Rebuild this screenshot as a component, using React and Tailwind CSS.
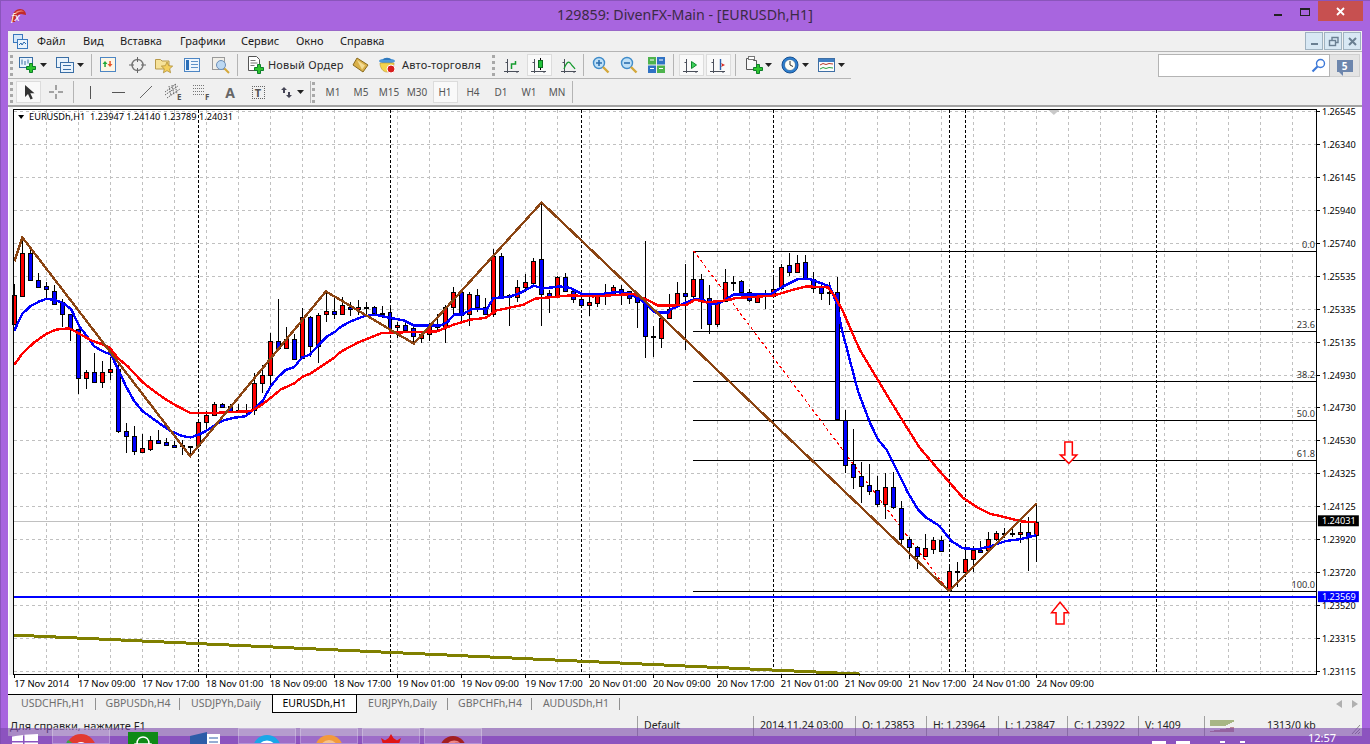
import React from "react";

const R = "#ff0000", B = "#0000ff";
const z6 = [[0,R,282,316,403,403],[1,R,145,190,317,320],[2,B,175,190,271,271],[3,B,250,271,290,293],[4,B,275,289,298,323],[5,B,286,302,341,341],[6,B,327,337,373,411],[7,B,373,373,418,453],[8,B,418,418,563,611],[9,R,540,547,563,597],[10,B,490,547,575,578],[11,R,514,547,575,593],[12,R,500,538,545,570],[13,B,525,538,727,733],[14,B,702,727,740,791],[15,B,712,740,787,797],[16,R,735,778,788,788],[17,R,742,754,781,785],[18,B,722,754,761,764],[19,B,748,760,769,772],[20,B,755,769,773,777],[21,B,752,769,772,797],[22,B,770,770,772,800],[23,R,695,700,769,769],[24,R,665,679,700,725],[25,R,640,646,679,680],[26,B,643,646,653,657],[27,B,645,652,665,668],[28,B,645,664,666,668],[29,R,645,663,665,680],[30,R,550,580,664,678],[31,R,525,556,578,610],[32,R,430,454,556,590],[33,B,326,454,475,475],[34,R,411,448,475,478],[35,B,432,448,508,508],[36,R,354,380,503,508],[37,B,378,380,469,500],[38,R,370,376,469,518],[39,R,305,362,373,395],[40,B,323,362,371,388],[41,R,320,344,371,375],[42,B,335,350,358,378]];
const z7 = [[43,R,330,352,358,375],[44,B,336,352,354,372],[45,B,348,352,368,372],[46,B,348,368,372,385],[47,B,352,367,413,420],[48,R,395,406,412,445],[49,B,400,406,420,430],[50,B,412,414,439,462],[51,R,425,431,443,460],[52,R,398,404,431,452],[53,B,372,404,412,425],[54,R,345,352,412,458],[55,R,290,307,352,372],[56,B,300,307,375,398],[57,R,305,313,373,408],[58,B,296,316,350,365],[59,B,325,350,371,375],[60,R,178,198,371,380],[61,B,188,198,317,320],[62,B,312,316,320,408],[63,R,270,290,322,335],[64,R,252,277,290,305],[65,R,205,214,280,290],[66,B,38,208,311,408],[67,B,300,310,318,368],[68,R,258,262,314,318],[69,B,250,262,302,302],[70,B,295,302,328,340],[71,B,305,328,344,350],[72,R,310,337,344,378],[73,R,310,316,338,350],[74,B,282,308,312,345],[75,R,285,292,308,312],[76,B,285,296,305,345],[77,B,304,304,325,342],[78,B,310,325,337,415],[79,B,153,337,439,503],[80,B,408,439,440,500],[81,R,385,385,443,473],[82,R,312,356,385,385]];
const z8 = [[83,R,125,160,198,200],[84,B,72,160,167,330],[85,R,35,117,167,180],[86,B,102,117,178,266],[87,B,135,175,253,282],[88,R,180,190,253,260],[89,R,88,127,183,185],[90,B,108,125,128,153],[91,B,120,124,155,165],[92,B,148,157,181,185],[93,R,160,165,185,185],[94,B,150,165,168,208],[95,R,112,148,168,170],[96,R,72,80,145,150],[97,B,40,76,95,108],[98,R,45,70,95,95],[99,B,45,67,118,118],[100,B,97,118,145,158],[101,B,125,140,160,180],[102,B,125,156,159,195],[103,B,110,157,539,540]];
const z9 = [[104,B,33,62,197,222],[105,B,90,196,233,270],[106,B,190,232,260,312],[107,B,195,259,275,288],[108,B,232,274,314,325],[109,R,222,265,314,360],[110,B,220,265,325,330],[111,B,305,328,419,435],[112,B,415,421,443,480],[113,B,440,443,470,510],[114,R,405,448,470,470],[115,R,415,424,449,465],[116,B,412,424,455,455],[117,R,495,517,575,578],[118,B,490,517,520,565],[119,R,460,481,520,520],[120,R,442,454,481,520],[121,B,427,453,458,462],[122,R,398,421,453,456],[123,R,396,403,421,425],[124,B,388,403,405,418],[125,B,385,403,406,415],[126,R,372,400,406,433],[127,B,355,400,410,516],[128,R,315,368,408,488]];
const cv = (base, rows) => rows.map(([i, c, wt, bt, bb, wb]) => ({ x: 13 + 8 * i, c, wt: Math.round(base + wt / 3), bt: Math.round(base + bt / 3), bb: Math.round(base + bb / 3), wb: Math.round(base + wb / 3) }));
const candles = [...cv(190, z6), ...cv(190, z7), ...cv(240, z8), ...cv(400, z9)];

const seg = (x0, y0, a) => a.map(([x, y]) => (x0 + x / 3).toFixed(1) + "," + (y0 + y / 3).toFixed(1)).join(" ");
const blue = [seg(10,190,[[10,423],[20,400],[34,372],[60,348],[85,335],[105,328],[130,330],[155,340],[180,358],[205,410],[230,443],[250,470],[275,485],[300,495],[322,540],[345,590],[370,635],[395,665],[420,683],[450,705],[480,725],[515,740],[540,744],[565,735],[590,722],[615,705],[640,692],[670,685],[705,680],[730,660],[755,635],[780,590],[800,565],[825,541],[850,533],[875,503],[898,495],[925,465],[950,440],[975,425]]),
seg(340,190,[[0,412],[30,395],[70,380],[105,375],[150,385],[190,392],[220,407],[300,408],[320,398],[342,375],[365,375],[395,358],[440,358],[460,325],[505,322],[540,310],[580,288],[610,296],[660,290],[690,295],[725,313],[770,315],[830,307],[870,313],[900,328],[945,368],[985,368]]),
seg(670,240,[[0,210],[45,190],[75,178],[95,178],[120,195],[150,190],[190,165],[300,165],[340,140],[385,118],[420,118],[480,140],[500,190],[515,265],[540,360],[565,455],[600,548]]),
seg(830,400,[[145,120],[170,150],[200,210],[235,280],[265,330],[290,355],[330,380],[365,425],[400,447],[445,450],[480,442],[530,425],[570,420],[620,408]])].join(" ");
const red = [seg(10,190,[[10,525],[35,490],[70,458],[105,433],[135,420],[175,416],[210,435],[240,452],[270,463],[295,473],[320,505],[350,530],[395,578],[430,605],[465,630],[490,645],[540,671],[600,671],[650,668],[720,665],[750,648],[780,625],[810,600],[850,582],[875,562],[900,552],[940,525],[970,505]]),
seg(340,190,[[0,487],[50,460],[125,430],[290,425],[340,405],[390,390],[435,385],[470,362],[550,345],[585,327],[690,317],[760,320],[880,313],[920,330],[955,348]]),
seg(670,240,[[0,198],[50,195],[75,180],[110,188],[160,183],[200,175],[310,168],[370,150],[410,140],[475,143],[495,170],[520,215],[550,285],[570,330],[600,380]]),
seg(830,400,[[180,0],[220,65],[270,145],[330,215],[400,295],[445,325],[480,343],[520,352],[580,367],[620,368]])].join(" ");
const brown = "13.3,261.7 21.3,237.7 189.3,456.7 325.3,291.7 413.3,344 541.3,202.7 949.3,591.7 1037.3,504.3";

const prices = ["1.26545","1.26340","1.26145","1.25940","1.25740","1.25535","1.25335","1.25135","1.24930","1.24730","1.24530","1.24325","1.24125","1.23920","1.23720","1.23520","1.23315","1.23115"];
const dates = ["17 Nov 2014","17 Nov 09:00","17 Nov 17:00","18 Nov 01:00","18 Nov 09:00","18 Nov 17:00","19 Nov 01:00","19 Nov 09:00","19 Nov 17:00","20 Nov 01:00","20 Nov 09:00","20 Nov 17:00","21 Nov 01:00","21 Nov 09:00","21 Nov 17:00","24 Nov 01:00","24 Nov 09:00"];
const fibs = [["0.0",251],["23.6",331],["38.2",381],["50.0",421],["61.8",461],["100.0",592]];
const vGrid = Array.from({ length: 40 }, (_, k) => 45 + 32 * k);
const seps = [197, 389, 581, 773, 949, 965, 1157];

function Chart() {
  return (
    <svg viewBox="8 107 1354 588" className="block w-[1354px] h-[588px] bg-white font-['Liberation_Sans',sans-serif] text-[9.2px]">
      <rect x="8" y="107" width="4" height="569" fill="#f0f0f0" />
      <g shapeRendering="crispEdges">
        {prices.map((_, k) => <line key={k} x1="13" x2="1318" y1={111.5 + 33 * k} y2={111.5 + 33 * k} stroke="#c0c0c0" strokeDasharray="3 3" />)}
        {vGrid.map((x) => <line key={x} x1={x + 0.5} x2={x + 0.5} y1="110" y2="675" stroke="#c0c0c0" strokeDasharray="3 3" />)}
        {seps.map((x) => <line key={x} x1={x + 0.5} x2={x + 0.5} y1="110" y2="675" stroke="#000" strokeDasharray="3 2" />)}
        <line x1="13" x2="1318" y1="522.5" y2="522.5" stroke="#c0c0c0" />
        {fibs.map(([t, y]) => <line key={t} x1="693" x2="1318" y1={y + 0.5} y2={y + 0.5} stroke="#000" />)}
        <line x1="693.5" y1="251" x2="949" y2="592" stroke="#ff0000" strokeWidth="1.2" strokeDasharray="3 3" />
        {candles.map((c, k) => (
          <g key={k}>
            <rect x={c.x} y={c.wt} width="1" height={c.wb - c.wt} fill="#000" />
            <rect x={c.x - 1.5} y={c.bt + 0.5} width="4" height={Math.max(c.bb - c.bt, 1)} fill={c.c} stroke="#000" />
          </g>
        ))}
        <polyline points={blue} fill="none" stroke="#0000ff" strokeWidth="2.4" />
        <polyline points={red} fill="none" stroke="#ff0000" strokeWidth="2.4" />
        <polyline points={brown} fill="none" stroke="#8b4513" strokeWidth="2.4" />
        <line x1="13" y1="636" x2="860" y2="675" stroke="#808000" strokeWidth="3" />
        <line x1="13" x2="1318" y1="598" y2="598" stroke="#0000ff" strokeWidth="2" />
        <rect x="12.5" y="109.5" width="1305" height="566" fill="none" stroke="#000" />
        {prices.map((_, k) => <line key={k} x1="1318" x2="1321" y1={111.5 + 33 * k} y2={111.5 + 33 * k} stroke="#000" />)}
        {dates.map((_, k) => <line key={k} x1={13.5 + 64 * k} x2={13.5 + 64 * k} y1="676" y2="679" stroke="#000" />)}
      </g>
      <path d="M1049 110h11l-5.5 5z" fill="#c8c8c8" />
      <path d="M17 115h6l-3 4z" fill="#000" />
      <text x="28" y="120.5" fill="#000" xmlSpace="preserve">EURUSDh,H1  1.23947 1.24140 1.23789 1.24031</text>
      {fibs.map(([t, y]) => <text key={t} x="1316" y={y - 3} textAnchor="end" fill="#333">{t}</text>)}
      {prices.map((p, k) => <text key={p} x="1323" y={115 + 33 * k} fill="#000">{p}</text>)}
      {dates.map((d, k) => <text key={d} x={13 + 64 * k} y="688" fill="#000" className="text-[9.5px]">{d}</text>)}
      <rect x="1319" y="516" width="41" height="11" fill="#000" />
      <text x="1323" y="525" fill="#fff">1.24031</text>
      <rect x="1319" y="592" width="41" height="11" fill="#0000ff" />
      <text x="1323" y="601" fill="#fff">1.23569</text>
      <path d="M1065.5 442.5h7.5v13h4.5l-8 8.5-8.5-8.5h4.500z" fill="#fff" stroke="#ff0000" strokeWidth="1.5" />
      <path d="M1060.7 603l8.500 10.500h-4.500v11.500h-8v-11.500h-4.500z" fill="#fff" stroke="#ff0000" strokeWidth="1.5" />
    </svg>
  );
}

const Svg = ({ className = "", w = 18, h = 18, children }) => (
  <svg width={w} height={h} viewBox={"0 0 " + w + " " + h} className={"block shrink-0 " + className}>{children}</svg>
);
const Plus = ({ x = 0, y = 0 }) => (
  <path transform={"translate(" + x + " " + y + ")"} d="M3.5 0.5h3v3h3v3h-3v3h-3v-3h-3v-3h3z" fill="#2ec52e" stroke="#0d7f2a" />
);
const Drop = ({ className = "" }) => (
  <Svg w={7} h={4} className={className}><path d="M0 0h7l-3.5 4z" fill="#222" /></Svg>
);
const Axes = () => <path d="M3.5 3v14M0 15.5h15M1.500 6.500h2M13 15v2" stroke="#4a4f5a" fill="none" />;

const NewChart = ({ className }) => (
  <Svg className={className}><rect x="0.5" y="1.5" width="13" height="10" fill="#e9f3fc" stroke="#3a6ea5" /><path d="M3 3.5v5M6 5v4M9 3.5v4" stroke="#3a6ea5" /><Plus x={7} y={7} /></Svg>
);
const Profiles = ({ className }) => (
  <Svg className={className}><rect x="0.5" y="1.5" width="12" height="10" fill="#e9f3fc" stroke="#3a6ea5" /><rect x="4.5" y="6.5" width="13" height="10" fill="#e9f3fc" stroke="#3a6ea5" /><path d="M7 9.5h8M7 13.5h8" stroke="#3a6ea5" /></Svg>
);
const Market = ({ className }) => (
  <Svg className={className}><rect x="0.5" y="1.5" width="15" height="14" fill="#fdf6e6" stroke="#4d86c4" /><path d="M5 5l-2.5 3h1.8v3h1.5v-3h1.700z" fill="#22a83a" /><path d="M10 11l-2.5-3h1.8v-3h1.5v3h1.700z" fill="#e8562a" /></Svg>
);
const Target = ({ className }) => (
  <Svg className={className}><circle cx="8.5" cy="9" r="5.5" fill="none" stroke="#777" strokeWidth="1.4" /><path d="M8.5 1v5M8.5 12v5M0 9h5M12 9h5" stroke="#666" /></Svg>
);
const StarFolder = ({ className }) => (
  <Svg className={className}><path d="M0.5 3.5h5l1.5 1.5h7v8h-13.500z" fill="#f6e29a" stroke="#b89a4a" /><path d="M12 6l1.7 3.7 4 .4-3 2.7.9 4-3.6-2.1-3.6 2.1.9-4-3-2.7 4-.4z" fill="#f4cf5c" stroke="#a8862e" strokeWidth=".7" /></Svg>
);
const Navigator = ({ className }) => (
  <Svg className={className}><rect x="0.5" y="2.5" width="15" height="13" fill="#eef5fc" stroke="#4d86c4" /><rect x="2" y="4" width="3" height="10" fill="#2b6fb8" /><path d="M7 5.5h7M7 8.5h7M7 11.5h7" stroke="#5f92c8" /></Svg>
);
const Tester = ({ className }) => (
  <Svg className={className}><rect x="0.5" y="1.5" width="12" height="12" fill="#f1efe9" stroke="#9a9a9a" /><circle cx="9" cy="9" r="4.5" fill="#bcd8f2" stroke="#6d8fb8" /><path d="M12.5 12.5l4.5 4.500" stroke="#d4a83a" strokeWidth="2" /></Svg>
);
const NewOrder = ({ className }) => (
  <Svg className={className}><path d="M1.5 0.5h8l3 3v11h-11z" fill="#fff" stroke="#555" /><path d="M3.5 4.5h5M3.5 7h7M3.5 9.5h4" stroke="#777" /><Plus x={7} y={8} /></Svg>
);
const Book = ({ className }) => (
  <Svg className={className}><path d="M5 2l11 7-5 7-10-7z" fill="#d9b04a" stroke="#8a6b1e" /><path d="M5 4l8 5.5-3 4" fill="#f3dc94" /></Svg>
);
const Auto = ({ className }) => (
  <Svg className={className}><ellipse cx="9" cy="5" rx="8" ry="2.5" fill="#4e97d8" /><path d="M5 4c0-3 8-3 8 0z" fill="#2f78bd" /><path d="M2 7h14c0 5-3 9-7 9s-7-4-7-9z" fill="#f4d44d" stroke="#b8962e" strokeWidth=".6" /><circle cx="13" cy="13" r="4" fill="#d81f1f" stroke="#fff" /></Svg>
);
const BarIco = ({ className }) => (
  <Svg className={className}><Axes /><path d="M7.5 13V8h4V5" fill="none" stroke="#159a2e" strokeWidth="1.5" /></Svg>
);
const CandleIco = ({ className }) => (
  <Svg className={className}><Axes /><path d="M9.5 2v12" stroke="#000" /><rect x="7.5" y="4.5" width="4" height="7" fill="#22c23a" stroke="#0c6d1e" /></Svg>
);
const LineIco = ({ className }) => (
  <Svg className={className}><Axes /><path d="M3 13c3-8 5-8 7-5 1 2 3 3 4 5" fill="none" stroke="#159a2e" strokeWidth="1.2" /></Svg>
);
const Zoom = ({ className, plus }) => (
  <Svg className={className}><circle cx="7" cy="7" r="5.5" fill="#bfe0f7" stroke="#3f8bc9" strokeWidth="1.4" /><path d={plus ? "M4 7h6M7 4v6" : "M4 7h6"} stroke="#2d6fae" strokeWidth="1.6" /><path d="M11 11l5.5 5.5" stroke="#d4a83a" strokeWidth="2.4" /></Svg>
);
const Tile = ({ className }) => (
  <Svg className={className}><rect x="0" y="1" width="8" height="7.5" fill="#4db34d" /><rect x="9" y="1" width="8" height="7.5" fill="#2f72c4" /><rect x="0" y="9.5" width="8" height="7.5" fill="#2f72c4" /><rect x="9" y="9.5" width="8" height="7.5" fill="#4db34d" /><path d="M2 4h4M11 4h4M2 12.5h4M11 12.5h4" stroke="#fff" /></Svg>
);
const PlayIco = ({ className }) => (
  <Svg className={className}><Axes /><path d="M8.5 5.5l5 3.500-5 3.500z" fill="#3fd05a" stroke="#0e8a2c" /></Svg>
);
const ShiftIco = ({ className }) => (
  <Svg className={className}><Axes /><path d="M10.5 3v11" stroke="#2b5fae" strokeWidth="1.4" /><path d="M15 9l-4-2 1 2-1 2z" fill="#d8261c" /></Svg>
);
const NewTpl = ({ className }) => (
  <Svg className={className}><path d="M1.5 2.5h5l2 2h3v9h-10z" fill="#f8f8f8" stroke="#555" /><rect x="3.5" y="0.5" width="6" height="3" fill="#fff" stroke="#777" /><Plus x={8} y={8} /></Svg>
);
const ClockIco = ({ className }) => (
  <Svg className={className}><circle cx="9" cy="9" r="8" fill="#2c7fd0" stroke="#184f8f" /><circle cx="9" cy="9" r="5.5" fill="#fdfdf5" stroke="#184f8f" strokeWidth=".6" /><path d="M9 5v4l3 1.500" fill="none" stroke="#333" /></Svg>
);
const Tpl = ({ className }) => (
  <Svg className={className}><rect x="0.5" y="2.5" width="16" height="13" fill="#fbfcfd" stroke="#3f6fa5" /><rect x="1" y="3" width="15" height="3" fill="#3f7fc4" /><path d="M2 9l3-1.500 3 1 3-1 4 .500" fill="none" stroke="#b83a2a" /><path d="M2 13l3-1.500 3 1 3-1 4 .500" fill="none" stroke="#2aa040" /></Svg>
);

const Grip = ({ className = "" }) => <div className={"w-[3px] h-[21px] border-l-[3px] border-dotted border-[#a8a8a8] shrink-0 " + className} />;
const Sep = ({ className = "" }) => <div className={"w-px h-[22px] bg-[#b4b4b4] shrink-0 " + className} />;
const Box = ({ className = "", children }) => <div className={"w-[25px] h-[22px] bg-[#f9f9f9] border border-[#dcdcdc] flex items-center justify-center shrink-0 " + className}>{children}</div>;
const Cell = ({ children, className = "w-[28px]" }) => <div className={"h-[22px] flex items-center justify-center shrink-0 " + className}>{children}</div>;

const menu = [["Файл", "w-[46px]"], ["Вид", "w-[37px]"], ["Вставка", "w-[60px]"], ["Графики", "w-[61px]"], ["Сервис", "w-[55px]"], ["Окно", "w-[44px]"], ["Справка", "w-[60px]"]];
const tabs = [["USDCHFh,H1", "w-[86px]"], ["GBPUSDh,H4", "w-[84px]"], ["USDJPYh,Daily", "w-[92px]"], ["EURUSDh,H1", "w-[85px]", true], ["EURJPYh,Daily", "w-[91px]"], ["GBPCHFh,H4", "w-[84px]"], ["AUDUSDh,H1", "w-[88px]"]];
const status = [["Default", "w-[116px]"], ["2014.11.24 03:00", "w-[102px]"], ["O: 1.23853", "w-[71px]"], ["H: 1.23964", "w-[72px]"], ["L: 1.23847", "w-[69px]"], ["C: 1.23922", "w-[71px]"], ["V: 1409", "w-[66px]"]];
const tfL = ["M1", "M5", "M15", "M30"], tfR = ["H4", "D1", "W1", "MN"];

function TaskBtn({ className = "", children }) {
  return <div className={"w-[58px] h-[16px] border border-white/25 bg-white/15 flex justify-center pt-[5px] overflow-hidden shrink-0 " + className}>{children}</div>;
}

export default function App() {
  return (
    <div className="relative w-[1370px] h-[744px] overflow-hidden bg-[#a865df] font-['Liberation_Sans',sans-serif] shadow-[inset_0_1px_0_#8a55bb,inset_1px_0_0_#8a55bb]">
      {/* Title bar */}
      <div className="h-[30px] grid grid-cols-[1fr_auto_1fr] items-center">
        <div className="pl-[10px]">
          <Svg w={17} h={15}>
            <path d="M1 14C1 5 6 1 10 1s6 3 6 6l-5-1c-3 0-5 3-6 8z" fill="#c22a2a" />
            <path d="M5 5c3-3 7-3 9-1-3-1-6 0-8 2z" fill="#f08a7a" />
            <text x="1" y="13" className="font-['Liberation_Serif',serif] italic text-[11px]" fill="#fff">fx</text>
          </Svg>
        </div>
        <div className="font-['Open_Sans',sans-serif] text-[14.2px] text-[#3b2a45]">129859: DivenFX-Main - [EURUSDh,H1]</div>
        <div className="flex items-start justify-end h-full pt-[1px] pr-[7px]">
          <div className="w-[8px] h-[2px] bg-[#222] mt-[13px] mr-[18px]" />
          <div className="w-[10px] h-[8px] border border-[#222] border-t-[2px] mt-[7px] mr-[8px]" />
          <div className="w-[45px] h-[20px] bg-[#c75050] flex items-center justify-center">
            <Svg w={9} h={9}><path d="M1 1l7 7M8 1l-7 7" stroke="#fff" strokeWidth="1.8" /></Svg>
          </div>
        </div>
      </div>

      {/* Window body */}
      <div className="ml-[8px] w-[1354px] bg-[#f0f0f0] border-t border-[#9a68c8] h-[706px] flex flex-col">
        {/* Menu */}
        <div className="h-[20px] flex items-center text-[11px] text-[#1a1a1a] shrink-0">
          <Svg w={15} h={15} className="ml-[5px] mr-[9px]">
            <rect x="0.5" y="0.5" width="9" height="8" fill="#d6e8f8" stroke="#3a78bd" /><rect x="4.5" y="5.5" width="10" height="9" fill="#e9f3fc" stroke="#3a78bd" /><path d="M6 11l2-2 1 2 2-3 2 2" fill="none" stroke="#2a68ad" />
          </Svg>
          {menu.map(([t, w]) => <div key={t} className={w + " shrink-0"}>{t}</div>)}
          <div className="ml-auto flex gap-px pr-px">
            {[
              <path key="a" d="M5 10h7" stroke="#6a7f92" strokeWidth="2" />,
              <g key="b" fill="none" stroke="#6a7f92" strokeWidth="1.4"><rect x="4.5" y="6.5" width="6" height="5" /><path d="M7 6V3.5h6v5h-2.5" /></g>,
              <path key="c" d="M5 4l7 7M12 4l-7 7" stroke="#6a7f92" strokeWidth="2" />,
            ].map((p, k) => (
              <div key={k} className="w-[18px] h-[18px] bg-[#d8e8f4] border border-[#9fb2c0] flex items-center justify-center">
                <Svg w={16} h={15}>{p}</Svg>
              </div>
            ))}
          </div>
        </div>

        {/* Toolbar 1 */}
        <div className="h-[28px] flex items-center justify-between border-t border-[#b4b4b4] shrink-0">
          <div className="w-[843px] h-full flex items-center border-b border-[#b4b4b4] pl-[2px] text-[11px] tracking-[0.2px] font-['DejaVu_Sans',sans-serif] text-[#2a2a2a]">
            <Grip />
            <NewChart className="ml-[6px]" /><Drop className="ml-[3px]" />
            <Profiles className="ml-[9px]" /><Drop className="ml-[3px]" />
            <Sep className="ml-[7px]" />
            <Market className="ml-[8px]" /><Target className="ml-[11px]" /><StarFolder className="ml-[8px]" /><Navigator className="ml-[11px]" /><Tester className="ml-[10px]" />
            <Sep className="ml-[7px]" />
            <NewOrder className="ml-[9px]" />
            <div className="ml-[3px] w-[74px] whitespace-nowrap">Новый Ордер</div>
            <Book className="ml-[10px]" /><Auto className="ml-[8px]" />
            <div className="ml-[6px] w-[78px] whitespace-nowrap">Авто-торговля</div>
            <Grip className="ml-[12px]" />
            <BarIco className="ml-[9px]" />
            <Box className="ml-[5px]"><CandleIco /></Box>
            <LineIco className="ml-[9px]" />
            <Sep className="ml-[4px]" />
            <Zoom plus className="ml-[8px]" /><Zoom className="ml-[10px]" /><Tile className="ml-[10px]" />
            <Sep className="ml-[7px]" />
            <Box className="ml-[5px]"><PlayIco /></Box>
            <Box className="ml-[2px]"><ShiftIco /></Box>
            <Sep className="ml-[4px]" />
            <NewTpl className="ml-[9px]" /><Drop className="ml-[2px]" />
            <ClockIco className="ml-[9px]" /><Drop className="ml-[3px]" />
            <Tpl className="ml-[9px]" /><Drop className="ml-[2px]" />
          </div>
          <div className="flex items-center pr-[2px]">
            <div className="w-[172px] h-[23px] bg-white border border-[#b4b4b4] flex items-center justify-end pr-[3px]">
              <Svg w={15} h={15}><circle cx="9.5" cy="5.5" r="4" fill="#fff" stroke="#3c78d8" strokeWidth="1.4" /><path d="M6.5 8.5l-5 5" stroke="#3c78d8" strokeWidth="2.2" /></Svg>
            </div>
            <div className="w-[30px] h-[23px] bg-[#e4e4e4] border border-[#d0d0d0] border-l-0 flex items-center justify-center">
              <div className="w-[16px] h-[12px] bg-[#6d86ad] text-white text-[10px] font-bold leading-[12px] text-center relative">5
                <div className="absolute left-[2px] top-[12px] w-0 h-0 border-t-[4px] border-t-[#6d86ad] border-l-[4px] border-l-transparent" />
              </div>
            </div>
          </div>
        </div>

        {/* Toolbar 2 */}
        <div className="h-[26px] flex items-center pl-[2px] shrink-0 text-[10px] text-[#555]">
          <Grip />
          <Box className="ml-[3px]">
            <Svg w={14} h={17}><path d="M3 1v12l3-3 2.5 5.5 2.3-1-2.5-5.3h4.200z" fill="#333" /></Svg>
          </Box>
          <Cell className="w-[24px] ml-[3px]"><Svg w={16} h={16}><path d="M8 1v5M8 10v5M1 8h5M10 8h5" stroke="#555" /></Svg></Cell>
          <Sep className="ml-[5px]" />
          <Cell className="w-[28px] ml-[2px]"><div className="w-px h-[13px] bg-[#555]" /></Cell>
          <Cell><div className="w-[13px] h-px bg-[#555]" /></Cell>
          <Cell><Svg w={14} h={14}><path d="M1 13L13 1" stroke="#666" /></Svg></Cell>
          <Cell>
            <Svg w={20} h={18}>
              <path d="M1 12L14 3M1 9L12 1M3 15L16 6M5 3l2 10M8 2l2 10M11 1l2 10" stroke="#666" strokeDasharray="1.5 1" fill="none" />
              <text x="13" y="17" className="text-[8px] font-bold" fill="#555">E</text>
            </Svg>
          </Cell>
          <Cell>
            <Svg w={20} h={18}>
              <path d="M1 2.5h12M1 5.5h12M1 8.5h12M1 11.5h12" stroke="#777" strokeDasharray="1 1" />
              <text x="13" y="17" className="text-[8px] font-bold" fill="#555">F</text>
            </Svg>
          </Cell>
          <Cell><span className="text-[14px] text-[#666] font-bold">A</span></Cell>
          <Cell>
            <div className="w-[13px] h-[13px] border border-dotted border-[#666] flex items-center justify-center text-[11px] font-bold text-[#555] leading-none">T</div>
          </Cell>
          <Svg w={13} h={13} className="ml-[8px]"><path d="M4 1l3 3H5v3H3V4H1zM9 12L6 9h2V6h2v3h2z" fill="#445" /></Svg>
          <Drop className="ml-[4px]" />
          <Sep className="ml-[6px]" />
          <Grip className="ml-[1px]" />
          <div className="w-[4px] shrink-0" />
          {tfL.map((t) => <Cell key={t}>{t}</Cell>)}
          <Cell><Box>H1</Box></Cell>
          {tfR.map((t) => <Cell key={t}>{t}</Cell>)}
          <Sep className="ml-px" />
        </div>

        <div className="h-[2px] bg-[#a2a2a2] shrink-0" />

        {/* Chart */}
        <Chart />

        {/* Tabs */}
        <div className="h-[19px] border-t border-black flex items-stretch text-[10.5px] text-[#6e6e6e] pl-[2px] shrink-0">
          {tabs.map(([t, w, active]) => (
            <div key={t} className={w + " shrink-0 flex items-center justify-center relative " + (active ? "bg-white text-black border border-t-0 border-black" : "")}>
              {t}
              {!active && t !== "USDJPYh,Daily" && <div className="absolute right-0 top-[3px] h-[12px] w-px bg-[#909090]" />}
            </div>
          ))}
          <div className="ml-auto flex items-center gap-[10px] pr-[4px]">
            <Svg w={6} h={8}><path d="M6 0v8L0 4z" fill="#b0b0b0" /></Svg>
            <Svg w={6} h={8}><path d="M0 0v8l6-4z" fill="#b0b0b0" /></Svg>
          </div>
        </div>

        {/* Status bar */}
        <div className="mt-[3px] h-[20px] flex items-stretch text-[10.5px] text-[#222] pl-[2px] shrink-0">
          <div className="w-[627px] whitespace-nowrap shrink-0 flex items-center text-[11px]">Для справки, нажмите F1</div>
          {status.map(([t, w]) => (
            <div key={t} className={w + " shrink-0 border-l border-[#a0a0a0] pl-[6px] flex items-center whitespace-nowrap"}>{t}</div>
          ))}
          <div className="w-[63px] shrink-0 border-l border-[#a0a0a0] pl-[5px] flex items-center">
            <Svg w={24} h={14}>
              <path d="M1 1v6M3 1v6M5 1v6M7 1v6M9 1v6M11 1v6M13 1v6M15 1v6M17 1v5M19 1v4M21 1v3M23 1v2" stroke="#5f7d18" />
              <path d="M1 13v-1M3 13v-1M5 13v-2M7 13v-2M9 13v-2M11 13v-3M13 13v-3M15 13v-3M17 13v-4M19 13v-4M21 13v-5M23 13v-5" stroke="#8e2a3a" />
            </Svg>
          </div>
          <div className="whitespace-nowrap flex items-center">1313/0 kb</div>
          <Svg w={12} h={14} className="ml-auto self-end mr-[1px]"><path d="M11 3L3 12M11 7l-5 5M11 10l-2 2" stroke="#8a8a8a" /></Svg>
        </div>
      </div>

      {/* Translucent taskbar */}
      <div className="absolute left-0 top-[728px] w-[1370px] h-[16px] bg-[#7a48aa]/60 flex items-start overflow-hidden">
        <Svg w={27} h={16} className="ml-[12px] mt-[6px]">
          <path d="M0 2.500l11-1.500V7H0zM12.500 0.800L26 0V7H12.500zM0 8.500h11V16H0zM12.500 8.500H26V16H12.500z" fill="#fff" />
        </Svg>
        <TaskBtn className="ml-[13px]">
          <Svg w={30} h={30}><circle cx="15" cy="15" r="15" fill="#e23b30" /><path d="M15 15L2 24a15 15 0 0 1 0-18z" fill="#3aa845" /><path d="M15 15h15a15 15 0 0 1-4 10z" fill="#f4c430" /><circle cx="15" cy="15" r="6" fill="#bcd6f5" stroke="#fff" strokeWidth="2" /></Svg>
        </TaskBtn>
        <Svg w={30} h={16} className="ml-[18px] mt-[4px]"><rect x="0" y="0" width="30" height="16" fill="#0f8a16" /><path d="M9 12c0-5 3-7 6-7s6 2 6 7M7 12h16v4H7z" fill="none" stroke="#fff" strokeWidth="1.5" /></Svg>
        <Svg w={30} h={16} className="ml-[32px] mt-[4px]"><path d="M0 4l17-4v16H0z" fill="#2d5ca8" /><rect x="17" y="2" width="13" height="14" fill="#fff" /><path d="M19 6h9M19 10h9" stroke="#2d5ca8" /></Svg>
        <TaskBtn className="ml-[18px]">
          <Svg w={30} h={30}><circle cx="15" cy="15" r="14" fill="#19a7e8" /><path d="M9 11c2-4 10-4 12 0" fill="none" stroke="#fff" strokeWidth="3" /></Svg>
        </TaskBtn>
        <TaskBtn className="ml-[4px]">
          <Svg w={30} h={30}><circle cx="15" cy="15" r="14" fill="#f29a3c" /><circle cx="15" cy="15" r="9" fill="#f7c38a" /></Svg>
        </TaskBtn>
        <TaskBtn className="ml-[4px]">
          <Svg w={26} h={26}><circle cx="13" cy="13" r="9" fill="#e01515" /><path d="M13 0l3 5h-6zM3 4l5 3-3 3zM23 4l-5 3 3 3z" fill="#e01515" /></Svg>
        </TaskBtn>
        <TaskBtn className="ml-[4px] bg-[#d8a0a0]/50 border-[#e8c8c8]/70">
          <Svg w={30} h={30}><circle cx="15" cy="15" r="13" fill="#a32020" /><path d="M8 12c3-6 10-7 14-3-4-1-8 0-11 4z" fill="#e88" /></Svg>
        </TaskBtn>
        <div className="ml-[670px] flex items-start gap-[10px] mt-[13px]">
          <div className="w-[14px] h-[4px] bg-white" />
          <div className="w-[14px] h-[4px] bg-white" />
          <div className="w-[5px] h-[2px] bg-white ml-[20px]" />
          <div className="w-[5px] h-[2px] bg-white ml-[5px]" />
        </div>
        <div className="ml-[63px] mt-[3px] text-[11px] leading-[13px] text-white whitespace-nowrap">12:57</div>
      </div>
    </div>
  );
}
